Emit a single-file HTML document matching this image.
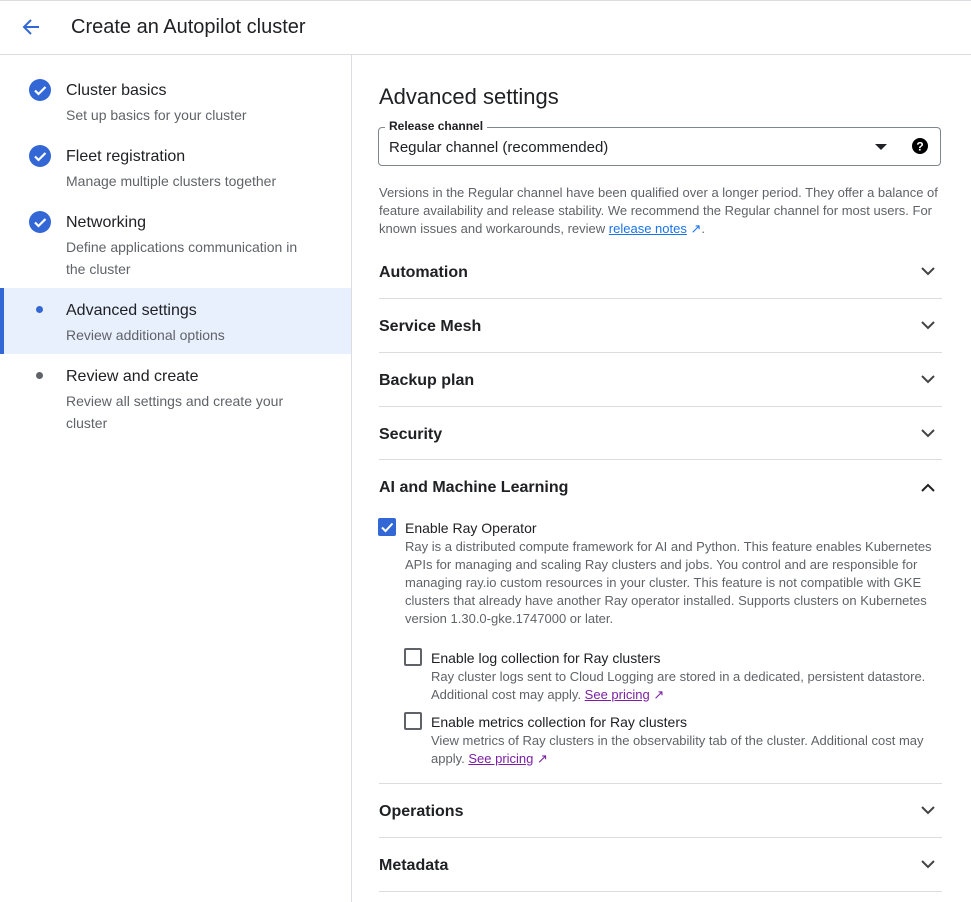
<!DOCTYPE html>
<html><head><style>
*{box-sizing:border-box;margin:0;padding:0}
body{width:971px;height:902px;overflow:hidden;background:#fff;font-family:"Liberation Sans",Arial,sans-serif;color:#202124;position:relative}
.a{position:absolute;white-space:nowrap}
.hdr{position:absolute;left:0;top:0;width:971px;height:55px;border-top:1px solid #dadce0;border-bottom:1px solid #dadce0}
.side{position:absolute;left:351px;top:55px;width:1px;height:847px;background:#dadce0}
.t{font-size:16px;color:#202124}
.s{font-size:14px;color:#5f6368;line-height:22px}
.chk{position:absolute;width:22px;height:22px;border-radius:50%;background:#3367d6}
.sec{position:absolute;left:379px;width:563px;height:54px;border-bottom:1px solid #dadce0}
.sec span{position:absolute;left:0;top:19px;font-size:16px;font-weight:bold;color:#202124}
.sec svg{position:absolute;right:6px;top:18px}
.p{font-size:13px;color:#5f6368;line-height:18px;white-space:normal}
a{color:#1a73e8}
.pl{color:#7b1fa2}
.cb{position:absolute;width:18px;height:18px;border:2px solid #5f6368;border-radius:2px}
</style></head><body>
<div class="hdr"></div>
<svg class="a" style="left:21px;top:17px" width="20" height="20" viewBox="0 0 20 20"><path d="M18 10H3M10 3L3 10l7 7" stroke="#3367d6" stroke-width="2" fill="none"/></svg>
<div class="a" style="left:71px;top:16px;font-size:20px">Create an Autopilot cluster</div>
<div class="side"></div>
<div class="a" style="left:0;top:288px;width:351px;height:66px;background:#e8f0fe"></div>
<div class="a" style="left:0;top:288px;width:4px;height:66px;background:#3367d6"></div>

<div class="chk" style="left:29px;top:79px"></div>
<div class="chk" style="left:29px;top:145px"></div>
<div class="chk" style="left:29px;top:211px"></div>
<svg class="a" style="left:29px;top:79px" width="22" height="22"><path d="M6 11.5l3.5 3.5 7-7" stroke="#fff" stroke-width="2.2" fill="none"/></svg>
<svg class="a" style="left:29px;top:145px" width="22" height="22"><path d="M6 11.5l3.5 3.5 7-7" stroke="#fff" stroke-width="2.2" fill="none"/></svg>
<svg class="a" style="left:29px;top:211px" width="22" height="22"><path d="M6 11.5l3.5 3.5 7-7" stroke="#fff" stroke-width="2.2" fill="none"/></svg>
<div class="a" style="left:36px;top:306px;width:7px;height:7px;border-radius:50%;background:#3367d6"></div>
<div class="a" style="left:36px;top:372px;width:7px;height:7px;border-radius:50%;background:#5f6368"></div>

<div class="a t" style="left:66px;top:82px">Cluster basics</div>
<div class="a s" style="left:66px;top:104px">Set up basics for your cluster</div>
<div class="a t" style="left:66px;top:148px">Fleet registration</div>
<div class="a s" style="left:66px;top:170px">Manage multiple clusters together</div>
<div class="a t" style="left:66px;top:214px">Networking</div>
<div class="a s" style="left:66px;top:236px">Define applications communication in<br>the cluster</div>
<div class="a t" style="left:66px;top:302px">Advanced settings</div>
<div class="a s" style="left:66px;top:324px">Review additional options</div>
<div class="a t" style="left:66px;top:368px">Review and create</div>
<div class="a s" style="left:66px;top:390px">Review all settings and create your<br>cluster</div>

<div class="a" style="left:379px;top:84px;font-size:22px">Advanced settings</div>
<div class="a" style="left:378px;top:127px;width:563px;height:39px;border:1px solid #80868b;border-radius:4px"></div>
<div class="a" style="left:385px;top:119px;background:#fff;padding:0 4px;font-size:12px;font-weight:bold;color:#202124">Release channel</div>
<div class="a" style="left:389px;top:139px;font-size:15px">Regular channel (recommended)</div>
<svg class="a" style="left:875px;top:143px" width="12" height="8"><path d="M0 1h12L6 7z" fill="#202124"/></svg>
<svg class="a" style="left:911px;top:137px" width="18" height="18" viewBox="0 0 18 18"><circle cx="9" cy="9" r="8" fill="#000"/><text x="9" y="13.5" text-anchor="middle" font-size="12" font-weight="bold" fill="#fff" font-family="Liberation Sans">?</text></svg>
<div class="a p" style="left:379px;top:184px;width:565px">Versions in the Regular channel have been qualified over a longer period. They offer a balance of feature availability and release stability. We recommend the Regular channel for most users. For known issues and workarounds, review <a href="#">release notes</a> <span style="color:#1a73e8">↗</span>.</div>

<div class="sec" style="top:245px"><span>Automation</span><svg width="16" height="16"><path d="M2 5l6 6 6-6" stroke="#444" stroke-width="2" fill="none"/></svg></div>
<div class="sec" style="top:299px"><span>Service Mesh</span><svg width="16" height="16"><path d="M2 5l6 6 6-6" stroke="#444" stroke-width="2" fill="none"/></svg></div>
<div class="sec" style="top:353px"><span>Backup plan</span><svg width="16" height="16"><path d="M2 5l6 6 6-6" stroke="#444" stroke-width="2" fill="none"/></svg></div>
<div class="sec" style="top:407px;height:53px"><span>Security</span><svg width="16" height="16"><path d="M2 5l6 6 6-6" stroke="#444" stroke-width="2" fill="none"/></svg></div>
<div class="sec" style="top:460px;height:324px"><span>AI and Machine Learning</span><svg width="16" height="16" style="top:20px"><path d="M2 11l6-6 6 6" stroke="#202124" stroke-width="2" fill="none"/></svg></div>

<div class="a" style="left:378px;top:518px;width:18px;height:18px;background:#3367d6;border-radius:2px"></div>
<svg class="a" style="left:378px;top:518px" width="18" height="18"><path d="M4 9.5l3.5 3.5 7-7.5" stroke="#fff" stroke-width="2" fill="none"/></svg>
<div class="a" style="left:405px;top:520px;font-size:14px">Enable Ray Operator</div>
<div class="a p" style="left:405px;top:538px;width:540px">Ray is a distributed compute framework for AI and Python. This feature enables Kubernetes APIs for managing and scaling Ray clusters and jobs. You control and are responsible for managing ray.io custom resources in your cluster. This feature is not compatible with GKE clusters that already have another Ray operator installed. Supports clusters on Kubernetes version 1.30.0-gke.1747000 or later.</div>

<div class="cb" style="left:404px;top:648px"></div>
<div class="a" style="left:431px;top:650px;font-size:14px">Enable log collection for Ray clusters</div>
<div class="a p" style="left:431px;top:668px;width:512px">Ray cluster logs sent to Cloud Logging are stored in a dedicated, persistent datastore. Additional cost may apply. <a class="pl" href="#">See pricing</a> <span class="pl">↗</span></div>
<div class="cb" style="left:404px;top:712px"></div>
<div class="a" style="left:431px;top:714px;font-size:14px">Enable metrics collection for Ray clusters</div>
<div class="a p" style="left:431px;top:732px;width:512px">View metrics of Ray clusters in the observability tab of the cluster. Additional cost may apply. <a class="pl" href="#">See pricing</a> <span class="pl">↗</span></div>

<div class="sec" style="top:784px"><span>Operations</span><svg width="16" height="16"><path d="M2 5l6 6 6-6" stroke="#444" stroke-width="2" fill="none"/></svg></div>
<div class="sec" style="top:838px"><span>Metadata</span><svg width="16" height="16"><path d="M2 5l6 6 6-6" stroke="#444" stroke-width="2" fill="none"/></svg></div>
</body></html>
